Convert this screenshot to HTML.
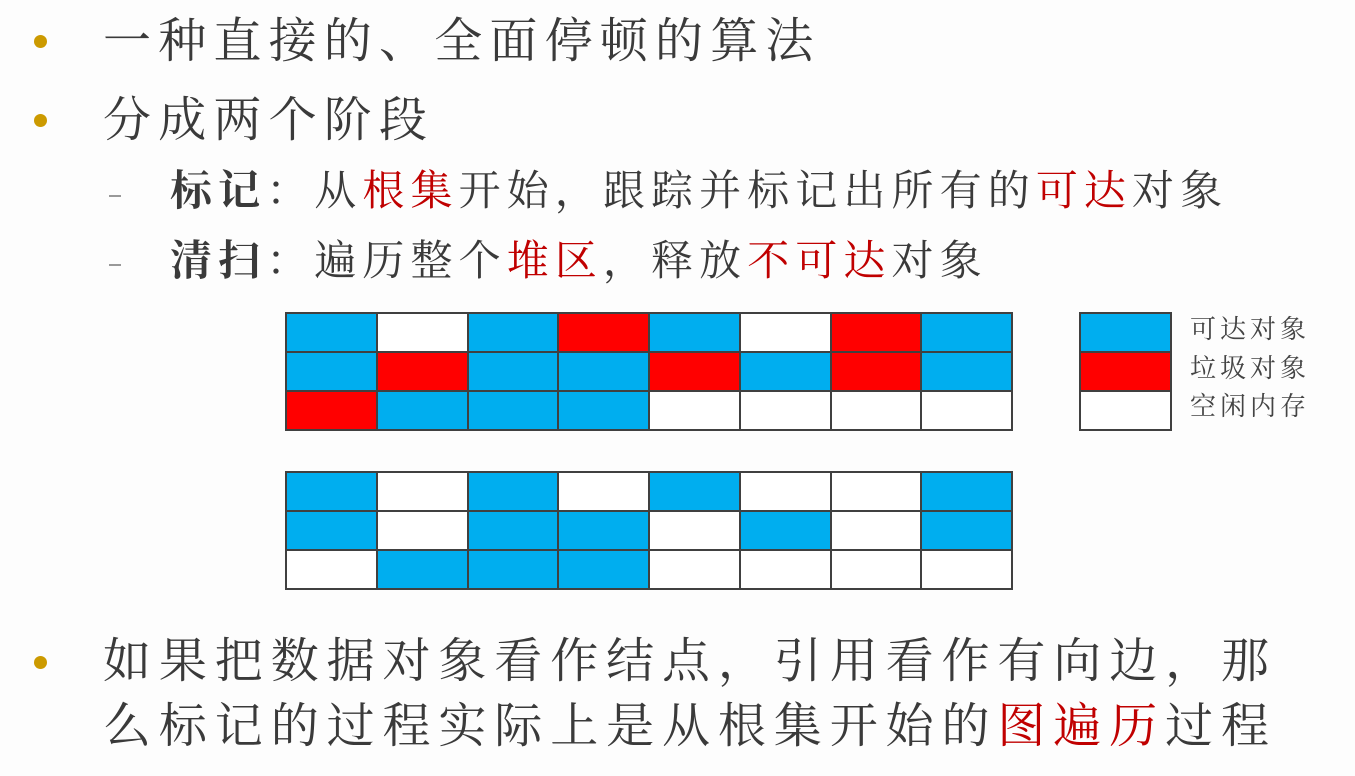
<!DOCTYPE html>
<html><head><meta charset="utf-8"><style>
html,body{margin:0;padding:0}
body{width:1355px;height:776px;background:#fdfdfd;position:relative;overflow:hidden;font-family:"Liberation Serif","Noto Serif CJK SC","WenQuanYi Zen Hei",serif;color:#3a3a3a}
.t{position:absolute;white-space:nowrap;line-height:1}
.l1{font-size:48px;letter-spacing:7.2px}
.l3{font-size:48px;letter-spacing:7.9px}
.l2{font-size:42px;letter-spacing:6.1px}
.r{color:#c00000}
.b{font-weight:bold}
.dot{position:absolute;width:13px;height:13px;border-radius:50%;background:#cc9a00}
.dash{position:absolute;width:12px;height:1.5px;background:#999}
.g{position:absolute;border-collapse:collapse}
.g td{border:2px solid #404040;width:88.75px;height:37px;padding:0;box-sizing:content-box}
.B{background:#00aeef}.R{background:#ff0000}.W{background:#fff}
.lg{font-size:26px;letter-spacing:4px;color:#444}
</style></head><body>
<div class="dot" style="left:34px;top:35px"></div>
<div class="t l1" style="left:103px;top:18px">一种直接的、全面停顿的算法</div>
<div class="dot" style="left:34px;top:114px"></div>
<div class="t l1" style="left:103px;top:97px">分成两个阶段</div>
<div class="dash" style="left:109px;top:195px"></div>
<div class="t l2" style="left:170px;top:171px"><span class="b">标记</span>：从<span class="r">根集</span>开始，跟踪并标记出所有的<span class="r">可达</span>对象</div>
<div class="dash" style="left:109px;top:264px"></div>
<div class="t l2" style="left:170px;top:241px"><span class="b">清扫</span>：遍历整个<span class="r">堆区</span>，释放<span class="r">不可达</span>对象</div>

<table class="g" style="left:285px;top:312px">
<tr><td class="B"></td><td class="W"></td><td class="B"></td><td class="R"></td><td class="B"></td><td class="W"></td><td class="R"></td><td class="B"></td></tr>
<tr><td class="B"></td><td class="R"></td><td class="B"></td><td class="B"></td><td class="R"></td><td class="B"></td><td class="R"></td><td class="B"></td></tr>
<tr><td class="R"></td><td class="B"></td><td class="B"></td><td class="B"></td><td class="W"></td><td class="W"></td><td class="W"></td><td class="W"></td></tr>
</table>
<table class="g" style="left:1079px;top:312px">
<tr><td class="B"></td></tr><tr><td class="R"></td></tr><tr><td class="W"></td></tr>
</table>
<div class="t lg" style="left:1190px;top:317px">可达对象</div>
<div class="t lg" style="left:1190px;top:356px">垃圾对象</div>
<div class="t lg" style="left:1190px;top:394px">空闲内存</div>

<table class="g" style="left:285px;top:471px">
<tr><td class="B"></td><td class="W"></td><td class="B"></td><td class="W"></td><td class="B"></td><td class="W"></td><td class="W"></td><td class="B"></td></tr>
<tr><td class="B"></td><td class="W"></td><td class="B"></td><td class="B"></td><td class="W"></td><td class="B"></td><td class="W"></td><td class="B"></td></tr>
<tr><td class="W"></td><td class="B"></td><td class="B"></td><td class="B"></td><td class="W"></td><td class="W"></td><td class="W"></td><td class="W"></td></tr>
</table>

<div class="dot" style="left:34px;top:656px"></div>
<div class="t l3" style="left:103px;top:638px">如果把数据对象看作结点，引用看作有向边，那</div>
<div class="t l3" style="left:103px;top:703px">么标记的过程实际上是从根集开始的<span class="r">图遍历</span>过程</div>
</body></html>
